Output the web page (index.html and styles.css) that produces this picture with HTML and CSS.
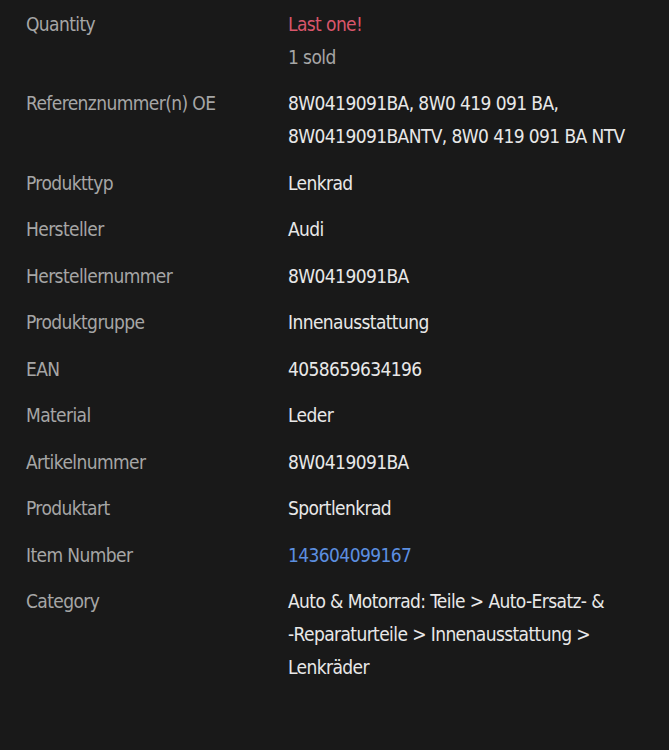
FILE: index.html
```html
<!DOCTYPE html>
<html lang="de">
<head>
<meta charset="utf-8">
<link rel="stylesheet" href="styles.css">
</head>
<body>
<dl class="specs">
  <div class="row">
    <dt class="label">Quantity</dt>
    <dd class="value"><span class="urgent">Last one!</span><span class="muted">1 sold</span></dd>
  </div>
  <div class="row">
    <dt class="label">Referenznummer(n) OE</dt>
    <dd class="value">8W0419091BA, 8W0 419 091 BA,<br>8W0419091BANTV, 8W0 419 091 BA NTV</dd>
  </div>
  <div class="row">
    <dt class="label">Produkttyp</dt>
    <dd class="value">Lenkrad</dd>
  </div>
  <div class="row">
    <dt class="label">Hersteller</dt>
    <dd class="value">Audi</dd>
  </div>
  <div class="row">
    <dt class="label">Herstellernummer</dt>
    <dd class="value">8W0419091BA</dd>
  </div>
  <div class="row">
    <dt class="label">Produktgruppe</dt>
    <dd class="value">Innenausstattung</dd>
  </div>
  <div class="row">
    <dt class="label">EAN</dt>
    <dd class="value">4058659634196</dd>
  </div>
  <div class="row">
    <dt class="label">Material</dt>
    <dd class="value">Leder</dd>
  </div>
  <div class="row">
    <dt class="label">Artikelnummer</dt>
    <dd class="value">8W0419091BA</dd>
  </div>
  <div class="row">
    <dt class="label">Produktart</dt>
    <dd class="value">Sportlenkrad</dd>
  </div>
  <div class="row">
    <dt class="label">Item Number</dt>
    <dd class="value"><a class="link" href="#">143604099167</a></dd>
  </div>
  <div class="row">
    <dt class="label">Category</dt>
    <dd class="value">Auto &amp; Motorrad: Teile &gt; Auto-Ersatz- &amp;<br>-Reparaturteile &gt; Innenausstattung &gt;<br>Lenkräder</dd>
  </div>
</dl>
</body>
</html>
```
FILE: styles.css
```css
html, body {
  margin: 0;
  background: #191919;
}
body {
  font-family: "DejaVu Sans Condensed", "DejaVu Sans", sans-serif;
  font-stretch: condensed;
  font-size: 19px;
  letter-spacing: -0.6px;
  line-height: 33px;
  color: #e8e8e8;
}
.specs {
  margin: 0;
  padding: 7.5px 0 0 26px;
  display: flex;
  flex-direction: column;
  gap: 13.5px;
}
.row {
  display: grid;
  grid-template-columns: 262px 1fr;
}
.label {
  color: #a6a6a6;
}
.value {
  margin: 0;
  display: flex;
  flex-direction: column;
  align-items: flex-start;
  white-space: nowrap;
}
.urgent {
  color: #d9566b;
}
.muted {
  color: #a6a6a6;
}
.link {
  color: #5c8fe0;
  text-decoration: none;
}
```
